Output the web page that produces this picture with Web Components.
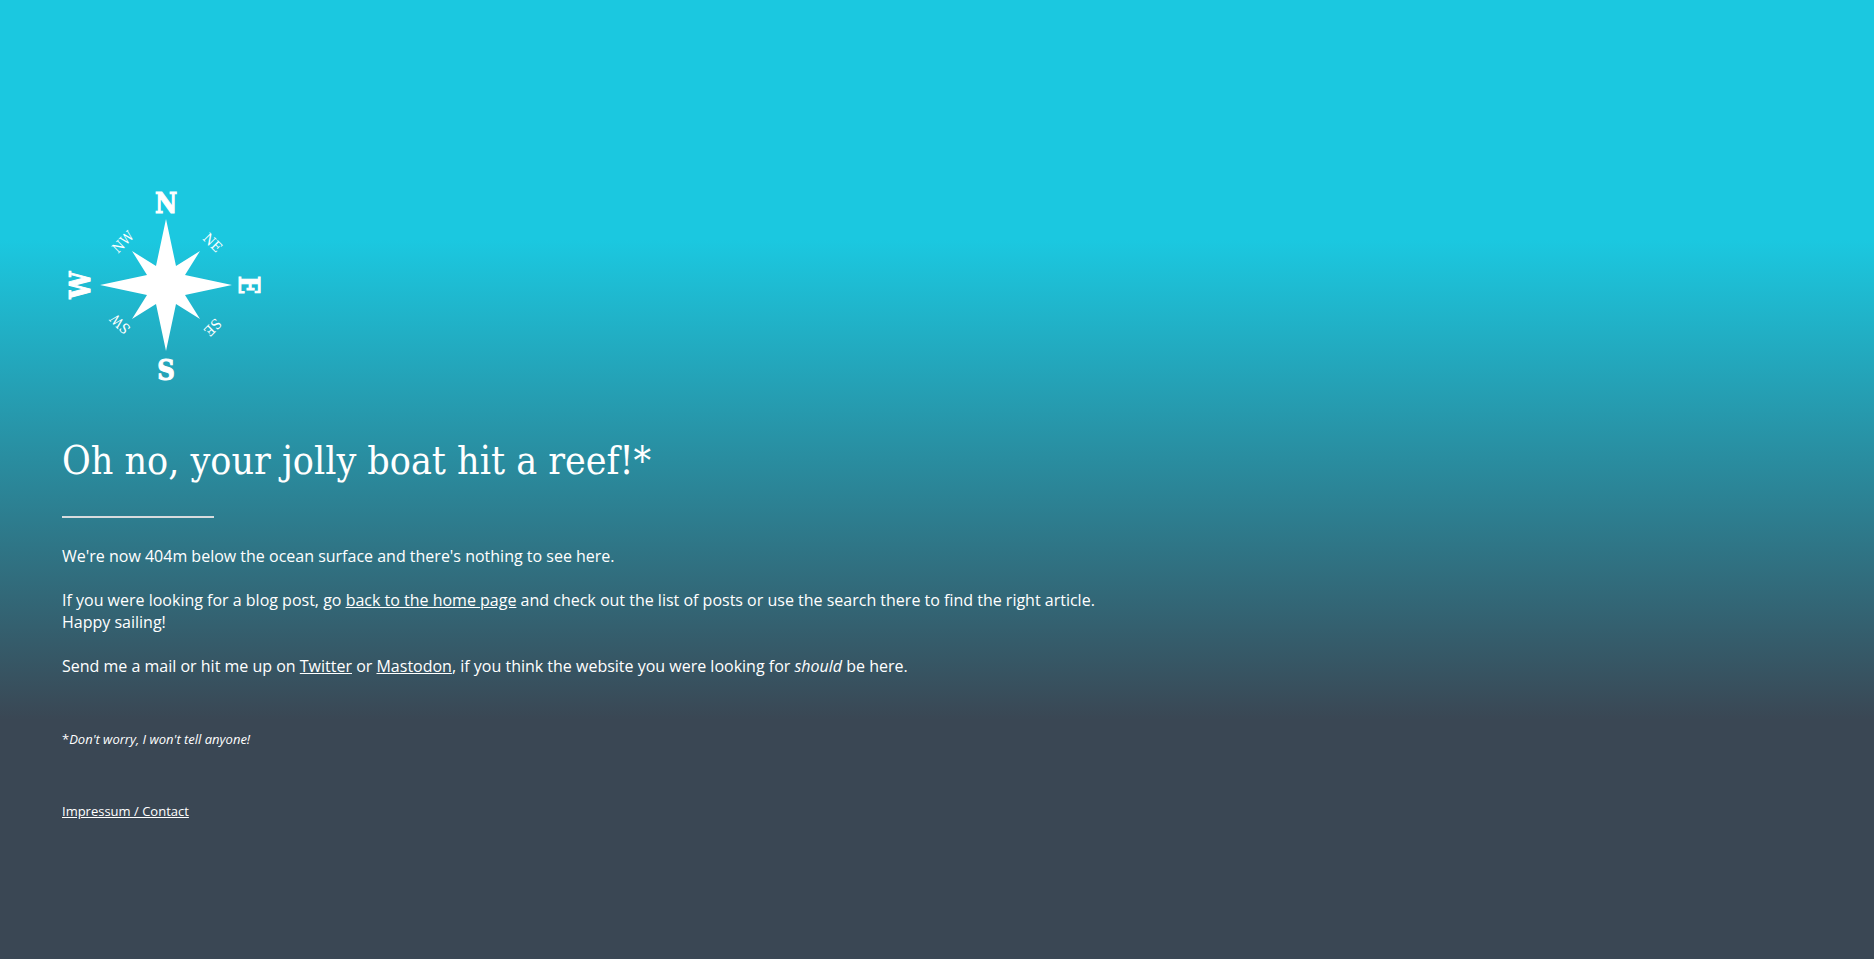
<!DOCTYPE html>
<html lang="en">
<head>
<meta charset="utf-8">
<meta name="viewport" content="width=device-width, initial-scale=1">
<title>404 – Page not found</title>
<style>
  html { background: #3a4754; }
  body { margin: 0; font: 16px/22px "Open Sans", sans-serif; color: #fff; }
  a { color: inherit; text-decoration: underline; }
</style>
</head>
<body>
<ocean-page>
  <compass-rose slot="logo"></compass-rose>
  <page-title>Oh no, your jolly boat hit a reef!*</page-title>
  <page-text>We're now 404m below the ocean surface and there's nothing to see here.</page-text>
  <page-text>If you were looking for a blog post, go <a href="#home">back to the home page</a> and check out the list of posts or use the search there to find the right article.<br>Happy sailing!</page-text>
  <page-text>Send me a mail or hit me up on <a href="#twitter">Twitter</a> or <a href="#mastodon">Mastodon</a>, if you think the website you were looking for <em>should</em> be here.</page-text>
  <small-print slot="footer">*<em>Don't worry, I won't tell anyone!</em></small-print>
  <small-print slot="footer"><a href="#impressum">Impressum / Contact</a></small-print>
</ocean-page>

<script>
const define = (name, html) => {
  const template = document.createElement('template');
  template.innerHTML = html;
  customElements.define(name, class extends HTMLElement {
    constructor() {
      super();
      this.attachShadow({ mode: 'open' }).append(template.content.cloneNode(true));
    }
  });
};

define('ocean-page', `
  <style>
    :host {
      display: block; box-sizing: border-box; min-height: 100vh; padding: 181px 62px 60px;
      background: linear-gradient(#1bc8e0 25%, #3a4754 75%);
    }
    main { display: flex; flex-direction: column; gap: 22px; }
    footer { display: flex; flex-direction: column; gap: 54px; margin-top: 53px; }
  </style>
  <slot name="logo"></slot>
  <main><slot></slot></main>
  <footer><slot name="footer"></slot></footer>`);

define('page-title', `
  <style>
    :host { display: block; }
    h1 { margin: 0; font: 400 39px/56px "DejaVu Serif Condensed", "DejaVu Serif", serif; font-stretch: condensed; }
    hr { width: 152px; height: 2px; margin: 27px 0 5px; border: 0; background: #d8dcde; }
  </style>
  <h1><slot></slot></h1>
  <hr>`);

define('page-text', `
  <style>
    :host { display: block; }
    p { margin: 0; }
  </style>
  <p><slot></slot></p>`);

define('small-print', `
  <style>
    :host { display: block; font-size: 13px; line-height: 18px; }
    p { margin: 0; }
  </style>
  <p><slot></slot></p>`);

define('compass-rose', `
  <style>
    :host { display: block; margin-bottom: 44px; }
    svg { display: block; width: 208px; height: 208px; fill: #fff; }
    text { text-anchor: middle; font-family: "DejaVu Serif Condensed", "DejaVu Serif", serif; font-stretch: condensed; }
    .main { font-size: 27px; font-weight: 700; stroke: #fff; stroke-width: 1px; }
    .minor { font-size: 14px; }
  </style>
  <svg viewBox="-104 -104 208 208" role="img" aria-label="Compass rose">
    <path d="M0-66 10-19 34-34 19-10 66 0 19 10 34 34 10 19 0 66-10 19-34 34-19 10-66 0-19-10-34-34-10-19Z"/>
    <g class="main">
      <text y="-72">N</text>
      <text transform="rotate(90)" y="-73">E</text>
      <text y="95">S</text>
      <text transform="rotate(-90)" y="-76">W</text>
    </g>
    <g class="minor">
      <text transform="rotate(45)" x="3" y="-58">NE</text>
      <text transform="rotate(-45)" y="-56">NW</text>
      <text transform="rotate(135)" x="-3" y="-58">SE</text>
      <text transform="rotate(-135)" x="5" y="-55">SW</text>
    </g>
  </svg>`);
</script>
</body>
</html>
